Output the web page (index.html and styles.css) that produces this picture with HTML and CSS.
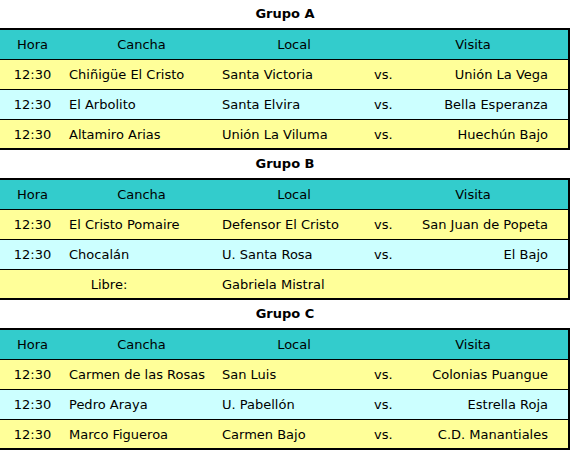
FILE: index.html
```html
<!DOCTYPE html>
<html lang="es">
<head>
<meta charset="utf-8">
<title>Fixture</title>
<link rel="stylesheet" href="styles.css">
</head>
<body>
<section class="group">
  <h2 class="group-title">Grupo A</h2>
  <table class="fixture">
    <colgroup><col class="c-hora"><col class="c-cancha"><col class="c-local"><col class="c-vs"><col class="c-visita"><col class="c-pad"></colgroup>
    <thead><tr><th>Hora</th><th>Cancha</th><th>Local</th><th></th><th>Visita</th><th></th></tr></thead>
    <tbody>
      <tr class="odd"><td class="hora">12:30</td><td>Chiñigüe El Cristo</td><td>Santa Victoria</td><td>vs.</td><td class="visita">Unión La Vega</td><td></td></tr>
      <tr class="even"><td class="hora">12:30</td><td>El Arbolito</td><td>Santa Elvira</td><td>vs.</td><td class="visita">Bella Esperanza</td><td></td></tr>
      <tr class="odd"><td class="hora">12:30</td><td>Altamiro Arias</td><td>Unión La Viluma</td><td>vs.</td><td class="visita">Huechún Bajo</td><td></td></tr>
    </tbody>
  </table>
</section>
<section class="group">
  <h2 class="group-title">Grupo B</h2>
  <table class="fixture">
    <colgroup><col class="c-hora"><col class="c-cancha"><col class="c-local"><col class="c-vs"><col class="c-visita"><col class="c-pad"></colgroup>
    <thead><tr><th>Hora</th><th>Cancha</th><th>Local</th><th></th><th>Visita</th><th></th></tr></thead>
    <tbody>
      <tr class="odd"><td class="hora">12:30</td><td>El Cristo Pomaire</td><td>Defensor El Cristo</td><td>vs.</td><td class="visita">San Juan de Popeta</td><td></td></tr>
      <tr class="even"><td class="hora">12:30</td><td>Chocalán</td><td>U. Santa Rosa</td><td>vs.</td><td class="visita">El Bajo</td><td></td></tr>
      <tr class="odd"><td class="libre" colspan="2">Libre:</td><td>Gabriela Mistral</td><td></td><td></td><td></td></tr>
    </tbody>
  </table>
</section>
<section class="group">
  <h2 class="group-title">Grupo C</h2>
  <table class="fixture">
    <colgroup><col class="c-hora"><col class="c-cancha"><col class="c-local"><col class="c-vs"><col class="c-visita"><col class="c-pad"></colgroup>
    <thead><tr><th>Hora</th><th>Cancha</th><th>Local</th><th></th><th>Visita</th><th></th></tr></thead>
    <tbody>
      <tr class="odd"><td class="hora">12:30</td><td>Carmen de las Rosas</td><td>San Luis</td><td>vs.</td><td class="visita">Colonias Puangue</td><td></td></tr>
      <tr class="even"><td class="hora">12:30</td><td>Pedro Araya</td><td>U. Pabellón</td><td>vs.</td><td class="visita">Estrella Roja</td><td></td></tr>
      <tr class="odd"><td class="hora">12:30</td><td>Marco Figueroa</td><td>Carmen Bajo</td><td>vs.</td><td class="visita">C.D. Manantiales</td><td></td></tr>
    </tbody>
  </table>
</section>
</body>
</html>
```
FILE: styles.css
```css
html, body {
  margin: 0;
  padding: 0;
  background: #ffffff;
}
body {
  font-family: "DejaVu Sans", Verdana, sans-serif;
  font-size: 13px;
  color: #000000;
  width: 570px;
}
.group {
  display: flex;
  flex-direction: column;
}
.group-title {
  margin: 0;
  height: 28px;
  line-height: 28px;
  font-size: 13px;
  font-weight: bold;
  text-align: center;
}
.fixture {
  width: 570px;
  table-layout: fixed;
  border-spacing: 0;
  border-top: 2px solid #000;
  border-right: 2px solid #000;
  border-bottom: 2px solid #000;
  border-left: 0;
}
.c-hora { width: 65px; }
.c-cancha { width: 153px; }
.c-local { width: 152px; }
.c-vs { width: 24px; }
.c-visita { width: 158px; }
.c-pad { width: 16px; }
.fixture th,
.fixture td {
  height: 29px;
  padding: 0 4px;
  border-bottom: 1px solid #000;
  white-space: nowrap;
  overflow: hidden;
  vertical-align: middle;
  text-align: left;
}
.fixture th {
  background: #33cccc;
  font-weight: normal;
  text-align: center;
  padding: 0;
}
.fixture tbody tr:last-child td {
  height: 28px;
  border-bottom: 0;
}
.odd td { background: #ffff99; }
.even td { background: #ccffff; }
.fixture td.hora,
.fixture td.libre {
  text-align: center;
  padding: 0;
}
.fixture td.visita {
  text-align: right;
}
```
